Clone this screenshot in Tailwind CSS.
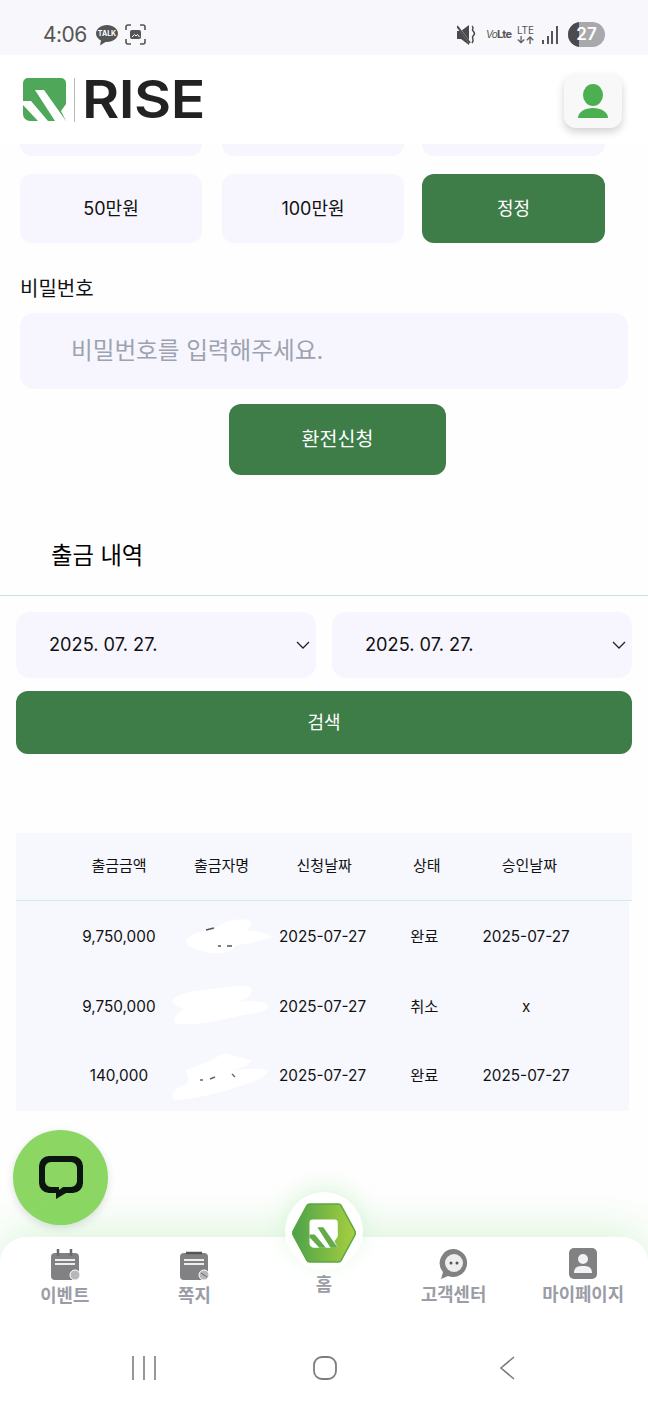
<!DOCTYPE html>
<html lang="ko">
  <head>
    <meta charset="UTF-8" />
    <title>RISE</title>
    <script src="https://cdn.jsdelivr.net/npm/@tailwindcss/browser@4"></script>
    <meta name="viewport" content="width=device-width, initial-scale=1.0" />
  </head>
  <body class="bg-[#fefefe] font-['Inter','Noto_Sans_CJK_KR',sans-serif] text-[#111]">
    <div class="relative w-[648px] h-[1404px] overflow-hidden flex flex-col">
      <!-- Status bar -->
      <div class="h-[55px] shrink-0 bg-[#f7f7fc] flex items-center justify-between pl-[43px] pr-[43px] pt-[14px] text-[#555]">
        <div class="flex items-center">
          <span class="text-[21px] leading-none tracking-[-0.5px] w-[53px]">4:06</span>
          <svg width="22" height="24" viewBox="0 0 22 24"><path d="M11 2C5 2 0 5.800 0 10.500c0 3 2 5.600 5 7.100l-1 5 5.500-3.700c.5.100 1 .1 1.500.1 6 0 11-3.800 11-8.500S17 2 11 2z" fill="#555"/><text x="11" y="13" text-anchor="middle" font-size="7" font-weight="700" fill="#fff">TALK</text></svg>
          <svg class="ml-[7px]" width="21" height="21" viewBox="0 0 21 21" fill="none" stroke="#555" stroke-width="1.600"><path d="M1 6V3a2 2 0 0 1 2-2h3M15 1h3a2 2 0 0 1 2 2v3M20 15v3a2 2 0 0 1-2 2h-3M6 20H3a2 2 0 0 1-2-2v-3"/><rect x="5" y="6" width="11" height="9" rx="2" fill="#555" stroke="none"/><path d="M7 13l2.500-2.500 1.500 1.500 1.500-1.500 2 2.500" stroke="#fff" stroke-width="1"/></svg>
        </div>
        <div class="flex items-center">
          <svg width="19" height="22" viewBox="0 0 19 22"><path d="M0 7h4l8-6v20l-8-6H0z" fill="#4a4a4a"/><path d="M1 3l12 16" stroke="#f7f7fc" stroke-width="2"/><path d="M0 2l13 17" stroke="#4a4a4a" stroke-width="2"/><path d="M15 2c3 2-1 3 1 5s2 3 0 5 2 3-1 7" stroke="#4a4a4a" stroke-width="1.500" fill="none"/></svg>
          <span class="ml-[10px] w-[24px] text-[11px] font-bold leading-none tracking-[-0.7px] whitespace-nowrap"><span class="italic font-normal text-[10px]">Vo</span>Lte</span>
          <div class="ml-[6px] w-[19px] flex flex-col items-center">
            <span class="text-[10px] leading-[10px]">LTE</span>
            <span class="text-[10px] font-bold leading-[10px]">↓↑</span>
          </div>
          <svg class="ml-[7px]" width="16" height="20" viewBox="0 0 16 20" fill="#555"><rect x="0" y="15" width="2" height="4"/><rect x="5" y="11" width="2" height="8"/><rect x="9" y="6" width="2" height="13"/><rect x="14" y="1" width="2" height="18"/></svg>
          <div class="ml-[10px] w-[37px] h-[25px] rounded-full bg-[#a9a9ad] overflow-hidden relative flex items-center justify-center">
            <div class="absolute left-0 top-0 bottom-0 w-[11px] bg-[#4a4a50]"></div>
            <span class="relative text-white text-[17px] font-semibold leading-none">27</span>
          </div>
        </div>
      </div>

      <!-- Header -->
      <header class="h-[89px] shrink-0 bg-white flex items-center justify-between pl-[23px] pr-[26px]">
        <div class="flex items-center">
          <svg width="43" height="43" viewBox="0 0 43 43"><path d="M5 0h33a5 5 0 0 1 5 5v21l-5 7 5 10H7a7 7 0 0 1-7-7V5a5 5 0 0 1 5-5z" fill="#4fa85a"/><path d="M12 12h9l22 31H32z" fill="#fff"/><path d="M0 23h8l17 20H15L0 27z" fill="#fff"/></svg>
          <div class="ml-[8px] w-px h-[44px] bg-[#bbb]"></div>
          <span class="ml-[7px] w-[119px] text-[#222] text-[52px] font-semibold leading-none tracking-[-0.5px] scale-x-[1.1] origin-left">RISE</span>
        </div>
        <div class="w-[58px] h-[54px] mt-[2px] rounded-[12px] bg-[#f8f8f8] shadow-[0_4px_8px_rgba(0,0,0,0.18)] flex items-center justify-center">
          <svg width="30" height="34" viewBox="0 0 30 34" fill="#4caf50"><ellipse cx="15" cy="11" rx="10" ry="11"/><path d="M0 34c0-6 7-10 15-10s15 4 15 10z"/></svg>
        </div>
      </header>

      <!-- Amount buttons -->
      <div class="px-[20px]">
        <div class="flex h-[12px] text-[18px]">
          <div class="w-[182px] rounded-b-[12px] bg-[#f7f6ff]"></div>
          <div class="w-[182px] ml-[20px] rounded-b-[12px] bg-[#f7f6ff]"></div>
          <div class="w-[183px] ml-[18px] rounded-b-[12px] bg-[#f7f6ff]"></div>
        </div>
        <div class="flex h-[69px] mt-[18px] text-[18px]">
          <div class="w-[182px] rounded-[12px] bg-[#f7f6ff] flex items-center justify-center">50만원</div>
          <div class="w-[182px] ml-[20px] rounded-[12px] bg-[#f7f6ff] flex items-center justify-center">100만원</div>
          <div class="w-[183px] ml-[18px] rounded-[12px] bg-[#3e7d48] text-white flex items-center justify-center">정정</div>
        </div>

        <!-- Password -->
        <label class="block mt-[33px] text-[20px] leading-[26px]">비밀번호</label>
        <div class="mt-[11px] w-[608px] h-[76px] rounded-[14px] bg-[#f7f6ff] flex items-center pl-[51px] text-[23.600px] text-[#9ca3af]">비밀번호를 입력해주세요.</div>
        <div class="mt-[15px] ml-[209px] w-[217px] h-[71px] rounded-[12px] bg-[#3e7d48] text-white text-[19.500px] flex items-center justify-center">환전신청</div>
      </div>

      <!-- Withdrawal history -->
      <h2 class="mt-[61px] ml-[51px] text-[23.300px] font-normal leading-[40px] text-black">출금 내역</h2>
      <div class="mt-[19px] h-px bg-[#bfe8d6]"></div>
      <div class="px-[16px]">
        <div class="flex gap-[16px] mt-[16px]">
          <div class="w-[300px] h-[66px] rounded-[14px] bg-[#f7f6ff] flex items-center justify-between pl-[33px] pr-[6px] text-[18.200px]">
            <span>2025. 07. 27.</span>
            <svg width="14" height="8" viewBox="0 0 14 8" fill="none" stroke="#222" stroke-width="1.300"><path d="M1 1l6 6 6-6"/></svg>
          </div>
          <div class="w-[300px] h-[66px] rounded-[14px] bg-[#f7f6ff] flex items-center justify-between pl-[33px] pr-[6px] text-[18.200px]">
            <span>2025. 07. 27.</span>
            <svg width="14" height="8" viewBox="0 0 14 8" fill="none" stroke="#222" stroke-width="1.300"><path d="M1 1l6 6 6-6"/></svg>
          </div>
        </div>
        <div class="mt-[13px] h-[63px] rounded-[12px] bg-[#3e7d48] text-white text-[18px] flex items-center justify-center">검색</div>

        <!-- Table -->
        <div class="mt-[79px] text-[15.300px]">
          <div class="h-[68px] bg-[#f7f7fe] border-b border-[#cdeee6] grid grid-cols-[repeat(5,102.600px)] pl-[51.700px] items-center text-center text-[15px]">
            <span>출금금액</span><span>출금자명</span><span>신청날짜</span><span>상태</span><span>승인날짜</span>
          </div>
          <div class="w-[613px] bg-[#f7f7fe] pt-px">
            <div class="h-[70px] grid grid-cols-[repeat(5,101.800px)] pl-[52px] items-center text-center">
              <span>9,750,000</span>
              <svg width="102" height="50" viewBox="0 0 102 50"><path d="M16 28c8-10 22-8 32-14 8-6 22-8 30-6 6 2 2 8-2 11 8-1 20 1 26 6-14 5-26 7-36 8-2 6-12 10-24 8-10-1-28-6-26-13z" fill="#fff"/><path d="M36 18l8-2M48 34h3M57 34h5" stroke="#555" stroke-width="1.500"/></svg>
              <span>2025-07-27</span><span>완료</span><span>2025-07-27</span>
            </div>
            <div class="h-[70px] grid grid-cols-[repeat(5,101.800px)] pl-[52px] items-center text-center">
              <span>9,750,000</span>
              <svg width="102" height="50" viewBox="0 0 102 50"><path d="M4 16c12-8 32-8 52-11 14-2 26-2 26 3 0 5-6 8-12 12 12-2 26-1 28 4 0 6-18 8-34 11-14 4-44 9-58 7-4-5 0-11 8-15-8-2-14-7-10-11z" fill="#fff"/></svg>
              <span>2025-07-27</span><span>취소</span><span>x</span>
            </div>
            <div class="h-[69px] grid grid-cols-[repeat(5,101.800px)] pl-[52px] items-center text-center">
              <span>140,000</span>
              <svg width="102" height="50" viewBox="0 0 102 50"><path d="M16 18c10-4 24-8 36-16 6-1 10 2 30 6-2 6-14 9-22 11 14-3 36-3 38 0 0 6-18 12-36 18-18 5-42 11-58 11-4-5 0-11 10-15 8-4 2-9 2-15z" fill="#fff"/><path d="M30 28h3M40 27l5-2M62 22l3 3" stroke="#666" stroke-width="1.400"/></svg>
              <span>2025-07-27</span><span>완료</span><span>2025-07-27</span>
            </div>
          </div>
        </div>
      </div>

      <!-- Floating chat button -->
      <div class="absolute left-[13px] top-[1130px] w-[95px] h-[95px] rounded-full bg-[#8cd763] shadow-[0_3px_8px_rgba(0,0,0,0.12)] flex items-center justify-center">
        <svg width="44" height="43" viewBox="0 0 44 43"><path d="M10 0h24a10 10 0 0 1 10 10v17a10 10 0 0 1-10 10h-7L17 43v-6h-7A10 10 0 0 1 0 27V10A10 10 0 0 1 10 0z" fill="#0c1510"/><path d="M12 6h20a6 6 0 0 1 6 6v13a6 6 0 0 1-6 6h-8l-4 3v-3h-8a6 6 0 0 1-6-6V12a6 6 0 0 1 6-6z" fill="#8cd763"/></svg>
      </div>

      <!-- Bottom nav -->
      <nav class="absolute left-0 right-0 top-[1237px] h-[167px] bg-white rounded-t-[26px] shadow-[0_-10px_40px_rgba(110,220,110,0.22)]">
        <div class="grid grid-cols-5 h-[83px] text-[#9a9ca6] text-[17.800px] font-bold text-center leading-none">
          <div class="flex flex-col items-center pt-[12px]">
            <svg width="30" height="32" viewBox="0 0 30 32"><rect x="1" y="4" width="28" height="27" rx="4" fill="#818183"/><path d="M8 0v7M21 0v7" stroke="#6a6a6c" stroke-width="2.500"/><path d="M5 11h20M5 15h20" stroke="#eee" stroke-width="1.800"/><circle cx="25" cy="26" r="5" fill="#b7b7b9" stroke="#fff"/></svg>
            <span class="mt-[6px]">이벤트</span>
          </div>
          <div class="flex flex-col items-center pt-[14px]">
            <svg width="30" height="30" viewBox="0 0 30 30"><rect x="1" y="2" width="28" height="27" rx="4" fill="#818183"/><path d="M7 2h16" stroke="#555" stroke-width="2.500"/><path d="M5 9h20M5 13h20" stroke="#eee" stroke-width="1.800"/><circle cx="25" cy="24" r="5" fill="#b7b7b9" stroke="#fff"/><path d="M22 22l6 4" stroke="#666"/></svg>
            <span class="mt-[6px]">쪽지</span>
          </div>
          <div class="flex flex-col items-center pt-[39px]">
            <span>홈</span>
          </div>
          <div class="flex flex-col items-center pt-[11px]">
            <svg width="30" height="33" viewBox="0 0 30 33"><path d="M15 1a14 14 0 1 1-6 27l-7 3 2-7A14 14 0 0 1 15 1z" fill="#818183"/><circle cx="15" cy="15" r="9" fill="#eee"/><circle cx="12" cy="15" r="1.500" fill="#555"/><circle cx="18" cy="15" r="1.500" fill="#555"/></svg>
            <span class="mt-[5px]">고객센터</span>
          </div>
          <div class="flex flex-col items-center pt-[11px]">
            <svg width="30" height="32" viewBox="0 0 30 32"><rect x="1" y="0" width="28" height="31" rx="5" fill="#818183"/><circle cx="15" cy="11" r="5" fill="#f2f2f2"/><path d="M6 25c0-6 4-7 9-7s9 1 9 7z" fill="#f2f2f2"/></svg>
            <span class="mt-[6px]">마이페이지</span>
          </div>
        </div>
        <!-- Android navigation -->
        <div class="grid grid-cols-3 items-center w-[520px] ml-[80px] mt-[36px] h-[24px]">
          <svg class="ml-[52px]" width="24" height="24" viewBox="0 0 24 24" stroke="#7d7d7d" stroke-width="1.600"><path d="M1 0v24M12 0v24M23 0v24"/></svg>
          <svg class="ml-[60px]" width="24" height="24" viewBox="0 0 24 24" fill="none" stroke="#7d7d7d" stroke-width="1.800"><rect x="1" y="1" width="22" height="22" rx="8"/></svg>
          <svg class="ml-[72px]" width="16" height="24" viewBox="0 0 16 24" fill="none" stroke="#7d7d7d" stroke-width="1.600"><path d="M15 1L2 12l13 11"/></svg>
        </div>
      </nav>

      <!-- Home badge -->
      <div class="absolute left-[285px] top-[1192px] w-[78px] h-[78px] rounded-full bg-white shadow-[0_-6px_22px_rgba(110,220,110,0.2)] flex items-center justify-center">
        <svg width="64" height="60" viewBox="0 0 66 62" class="mt-[4px]">
          <defs><linearGradient id="hex" x1="0" x2="1"><stop offset="0" stop-color="#4ba24a"/><stop offset="1" stop-color="#a8cf3f"/></linearGradient></defs>
          <path d="M18 1h30a3 3 0 0 1 2.600 1.500L64.500 28a6 6 0 0 1 0 6L50.600 59.500A3 3 0 0 1 48 61H18a3 3 0 0 1-2.600-1.500L1.500 34a6 6 0 0 1 0-6L15.400 2.500A3 3 0 0 1 18 1z" fill="url(#hex)" stroke="#5aa843" stroke-width="1.500"/>
          <g transform="translate(18 17) scale(0.68)">
            <path d="M5 0h33a5 5 0 0 1 5 5v21l-5 7 5 10H7a7 7 0 0 1-7-7V5a5 5 0 0 1 5-5z" fill="#fff"/>
            <path d="M12 12h9l22 31H32z" fill="#62ab48"/>
            <path d="M0 23h8l17 20H15L0 27z" fill="#62ab48"/>
          </g>
        </svg>
      </div>
    </div>
  </body>
</html>
